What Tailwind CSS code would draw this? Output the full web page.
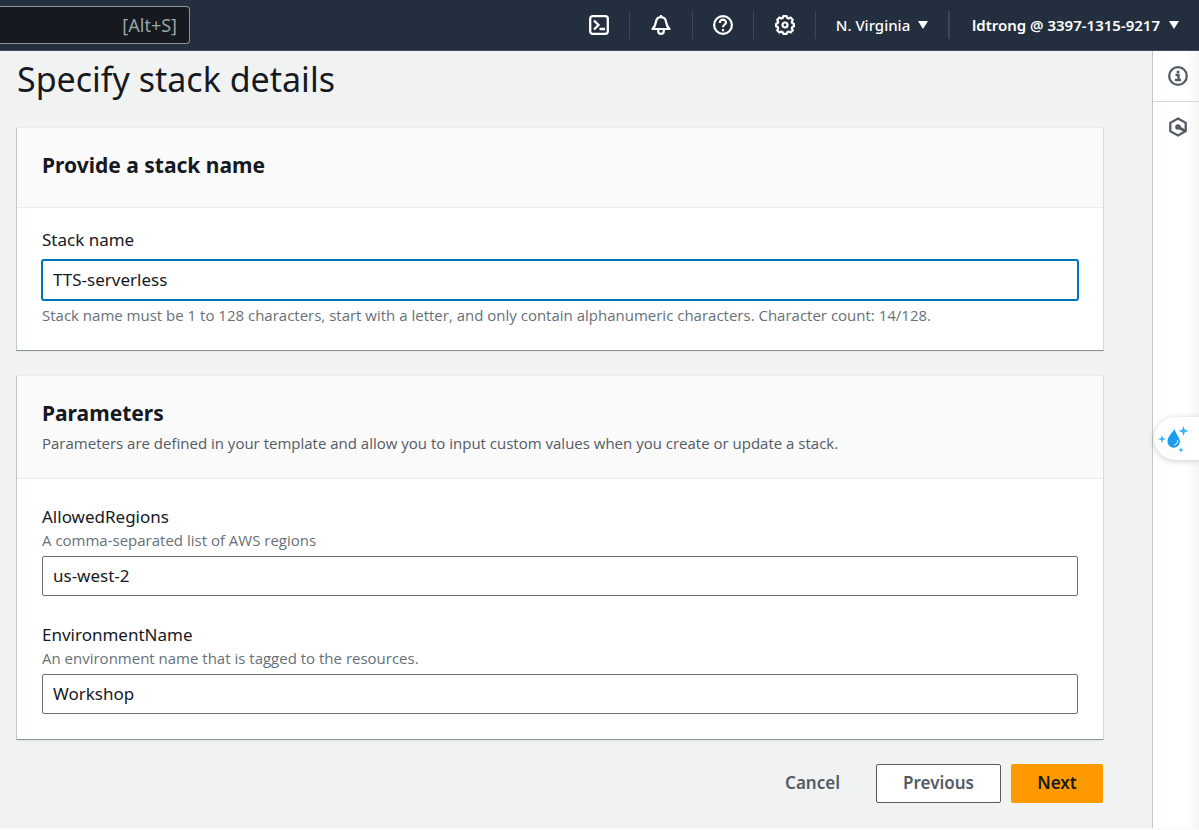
<!DOCTYPE html>
<html lang="en">
<head>
<meta charset="utf-8">
<meta name="viewport" content="width=device-width, initial-scale=1">
<title>Specify stack details</title>
<script src="https://cdn.jsdelivr.net/npm/@tailwindcss/browser@4"></script>
</head>
<body class="flex min-h-screen flex-col border-b-2 border-[#fafafa] bg-[#f1f3f3] font-['Noto_Sans','Open_Sans',sans-serif] text-[#16191f]">
<header class="flex h-[51px] shrink-0 items-center justify-between border-b border-[#414d5c] bg-[#232f3e] text-white">
  <div class="flex h-[38px] w-[190px] items-center rounded-r-sm border border-l-0 border-[#8d9494] bg-[#16191f] pr-3">
    <input type="search" aria-label="Search" class="min-w-0 flex-1 bg-transparent outline-none">
    <kbd class="font-['Noto_Sans',sans-serif] text-[18px] leading-6 text-[#95a5a6]">[Alt+S]</kbd>
  </div>
  <nav class="flex items-center" aria-label="Account">
    <button type="button" aria-label="CloudShell" class="flex h-7 w-[61px] items-center justify-center">
      <svg class="size-5" viewBox="0 0 20 20" fill="none" stroke="currentColor" stroke-width="2.300"><rect x="1.200" y="1.200" width="17.600" height="17.600" rx="2.500"/><path d="M5 5.500 9.500 10 5 14.500M10.500 14H16"/></svg>
    </button>
    <button type="button" aria-label="Notifications" class="flex h-7 w-[63px] items-center justify-center border-l border-[#414750]">
      <svg class="size-5" viewBox="0 0 20 20" fill="none" stroke="currentColor" stroke-width="2.200" stroke-linejoin="round"><path d="M10 0v2M1.500 14C4 11.500 4.500 10 4.800 7.500 5.200 4.200 7 2.200 10 2.200s4.800 2 5.200 5.300C15.500 10 16 11.500 18.500 14ZM7.200 14.500v1.500a2.800 2.800 0 0 0 5.600 0v-1.500"/></svg>
    </button>
    <button type="button" aria-label="Help" class="flex h-7 w-[61px] items-center justify-center border-l border-[#414750]">
      <svg class="size-5" viewBox="0 0 20 20" fill="none" stroke="currentColor" stroke-width="2.200"><circle cx="10" cy="10" r="8.900"/><path d="M6.800 8V7.500A3.100 2.900 0 0 1 13 7.500C13 9.500 10 9.600 10 12.300M10 14v2.200"/></svg>
    </button>
    <button type="button" aria-label="Settings" class="flex h-7 w-[62px] items-center justify-center border-l border-[#414750]">
      <svg class="size-5" viewBox="0 0 20 20" fill="none" stroke="currentColor" stroke-width="2.200" stroke-linejoin="round"><path d="M8.300 1.100h3.400l.6 1.900 1.300.6 2-1 2.200 2.300-1 1.900.5 1.300 1.600.6v2.700l-1.600.7-.5 1.300 1 1.900-2.200 2.300-2-1-1.300.6-.6 1.700H8.300l-.6-1.700-1.300-.6-2 1-2.200-2.300 1-1.900-.5-1.300-1.600-.7V8.700l1.600-.6.5-1.300-1-1.900 2.200-2.300 2 1L7.700 3Z"/><circle cx="10" cy="10" r="2.500"/></svg>
    </button>
    <button type="button" class="flex h-7 w-[133px] items-center justify-center gap-2 border-l border-[#414750] text-[15px] font-medium">N. Virginia
      <svg class="h-2 w-[10px]" viewBox="0 0 10 8" fill="currentColor"><path d="M0 0h10L5 8Z"/></svg>
    </button>
    <button type="button" class="flex h-7 items-center gap-[9px] border-l-2 border-[#414750] pr-5 pl-[22px] text-[15px] font-semibold">ldtrong @ 3397-1315-9217
      <svg class="h-2 w-[10px]" viewBox="0 0 10 8" fill="currentColor"><path d="M0 0h10L5 8Z"/></svg>
    </button>
  </nav>
</header>
<div class="flex flex-1">
  <main class="min-w-0 flex-1 pr-12 pl-4">
    <h1 class="pt-1 pl-px text-[34px] leading-12">Specify stack details</h1>
    <form>
      <section class="mt-6 border border-t-[#eaeded] border-r-[#d5dbdb] border-b-[#879196] border-l-[#c0c8c8] bg-white shadow-xs">
        <div class="border-b border-[#eaeded] bg-[#fafafa] px-[25px] pt-[22px] pb-[27px]">
          <h2 class="text-[21px] leading-[30px] font-bold">Provide a stack name</h2>
        </div>
        <div class="px-[25px] pt-5 pb-6">
          <label for="stack" class="block text-[17px] leading-6">Stack name</label>
          <input id="stack" type="text" value="TTS-serverless" aria-describedby="stack-hint" class="mt-2 block h-10 w-full rounded-xs border border-[#0073bb] bg-white px-[10px] pb-[2px] text-[17px] ring-1 ring-[#0073bb] outline-none">
          <p id="stack-hint" class="mt-1 font-['Open_Sans',sans-serif] text-[15px] leading-[22px] text-[#687078]">Stack name must be 1 to 128 characters, start with a letter, and only contain alphanumeric characters. Character count: 14/128.</p>
        </div>
      </section>
      <section class="mt-6 border border-t-[#eaeded] border-r-[#d5dbdb] border-b-[#879196] border-l-[#c0c8c8] bg-white shadow-xs">
        <div class="border-b border-[#eaeded] bg-[#fafafa] px-[25px] pt-[22px] pb-6">
          <h2 class="text-[21px] leading-[30px] font-bold">Parameters</h2>
          <p class="mt-1 font-['Open_Sans',sans-serif] text-[15px] leading-[22px] text-[#545b64]">Parameters are defined in your template and allow you to input custom values when you create or update a stack.</p>
        </div>
        <div class="flex flex-col gap-[27px] px-[25px] pt-[26px] pb-[25px]">
          <div>
            <label for="regions" class="block text-[17px] leading-6">AllowedRegions</label>
            <p id="regions-hint" class="font-['Open_Sans',sans-serif] text-[15px] leading-[22px] text-[#687078]">A comma-separated list of AWS regions</p>
            <input id="regions" type="text" value="us-west-2" aria-describedby="regions-hint" class="mt-[5px] block h-10 w-full rounded-xs border border-[#687078] bg-white px-[10px] pb-[2px] text-[17px]">
          </div>
          <div>
            <label for="env" class="block text-[17px] leading-6">EnvironmentName</label>
            <p id="env-hint" class="font-['Open_Sans',sans-serif] text-[15px] leading-[22px] text-[#687078]">An environment name that is tagged to the resources.</p>
            <input id="env" type="text" value="Workshop" aria-describedby="env-hint" class="mt-[5px] block h-10 w-full rounded-xs border border-[#687078] bg-white px-[10px] pb-[2px] text-[17px]">
          </div>
        </div>
      </section>
      <div class="mt-6 flex justify-end gap-[10px] pr-px text-[17px] font-semibold">
        <button type="button" class="h-[39px] px-[26px] pb-[2px] text-[#545b64]">Cancel</button>
        <button type="button" class="h-[39px] w-[125px] rounded-xs border border-[#545b64] bg-white pb-[2px] text-[#545b64]">Previous</button>
        <button type="submit" class="h-[39px] w-[92px] rounded-xs bg-[#ff9900] pb-[2px]">Next</button>
      </div>
    </form>
  </main>
  <aside class="relative w-[47px] shrink-0 border-l border-[#c0c8c8] bg-linear-to-r from-white from-75% to-[#f5f5f5] text-[#545b64]">
    <button type="button" aria-label="Info" class="flex h-[51px] w-full items-center justify-center border-b border-[#d5dbdb] pl-1">
      <svg class="size-5" viewBox="0 0 20 20" fill="none" stroke="currentColor" stroke-width="2.300"><circle cx="10" cy="10" r="8.800"/><path d="M8.700 6h2.700M7.500 9H10.500v5M7 14h6"/></svg>
    </button>
    <button type="button" aria-label="Resources" class="flex h-[50px] w-full items-center justify-center pl-1">
      <svg class="size-5" viewBox="0 0 20 20" fill="none" stroke="currentColor" stroke-width="2.300"><path d="m10 1.500 7.700 4.300v8.400L10 18.500l-7.700-4.300V5.800Z"/><circle cx="10" cy="10" r="2.800" fill="currentColor" stroke="none"/><path d="m10 10 7 4" stroke-width="2.800"/></svg>
    </button>
    <button type="button" aria-label="Assistant" class="absolute top-[366px] right-0 flex h-[43px] w-[45px] items-center rounded-l-full bg-white pl-1 shadow-[0_1px_6px_#0003]">
      <svg class="h-7 w-[30px]" viewBox="0 0 30 28" fill="#1c9cf0"><path d="M16.500 4C14 8 9.500 12 9.500 16.500a6.200 6.200 0 0 0 12.400 0C21.900 12.500 17.500 8.500 16.500 4Z"/><path d="M19.500 15c.5 3-1 4.500-3.500 5" fill="none" stroke="#fff" stroke-width="1"/><path d="m25.500 1 1.300 3.700 3.700 1.300-3.700 1.300-1.300 3.700-1.300-3.700L20.500 6l3.700-1.300ZM4 10l1 3 3 1-3 1-1 3-1-3-3-1 3-1ZM23 22l.8 2.200 2.200.8-2.200.8L23 28l-.8-2.200-2.200-.8 2.200-.8Z" fill="#38b2f5"/></svg>
    </button>
  </aside>
</div>
</body>
</html>
